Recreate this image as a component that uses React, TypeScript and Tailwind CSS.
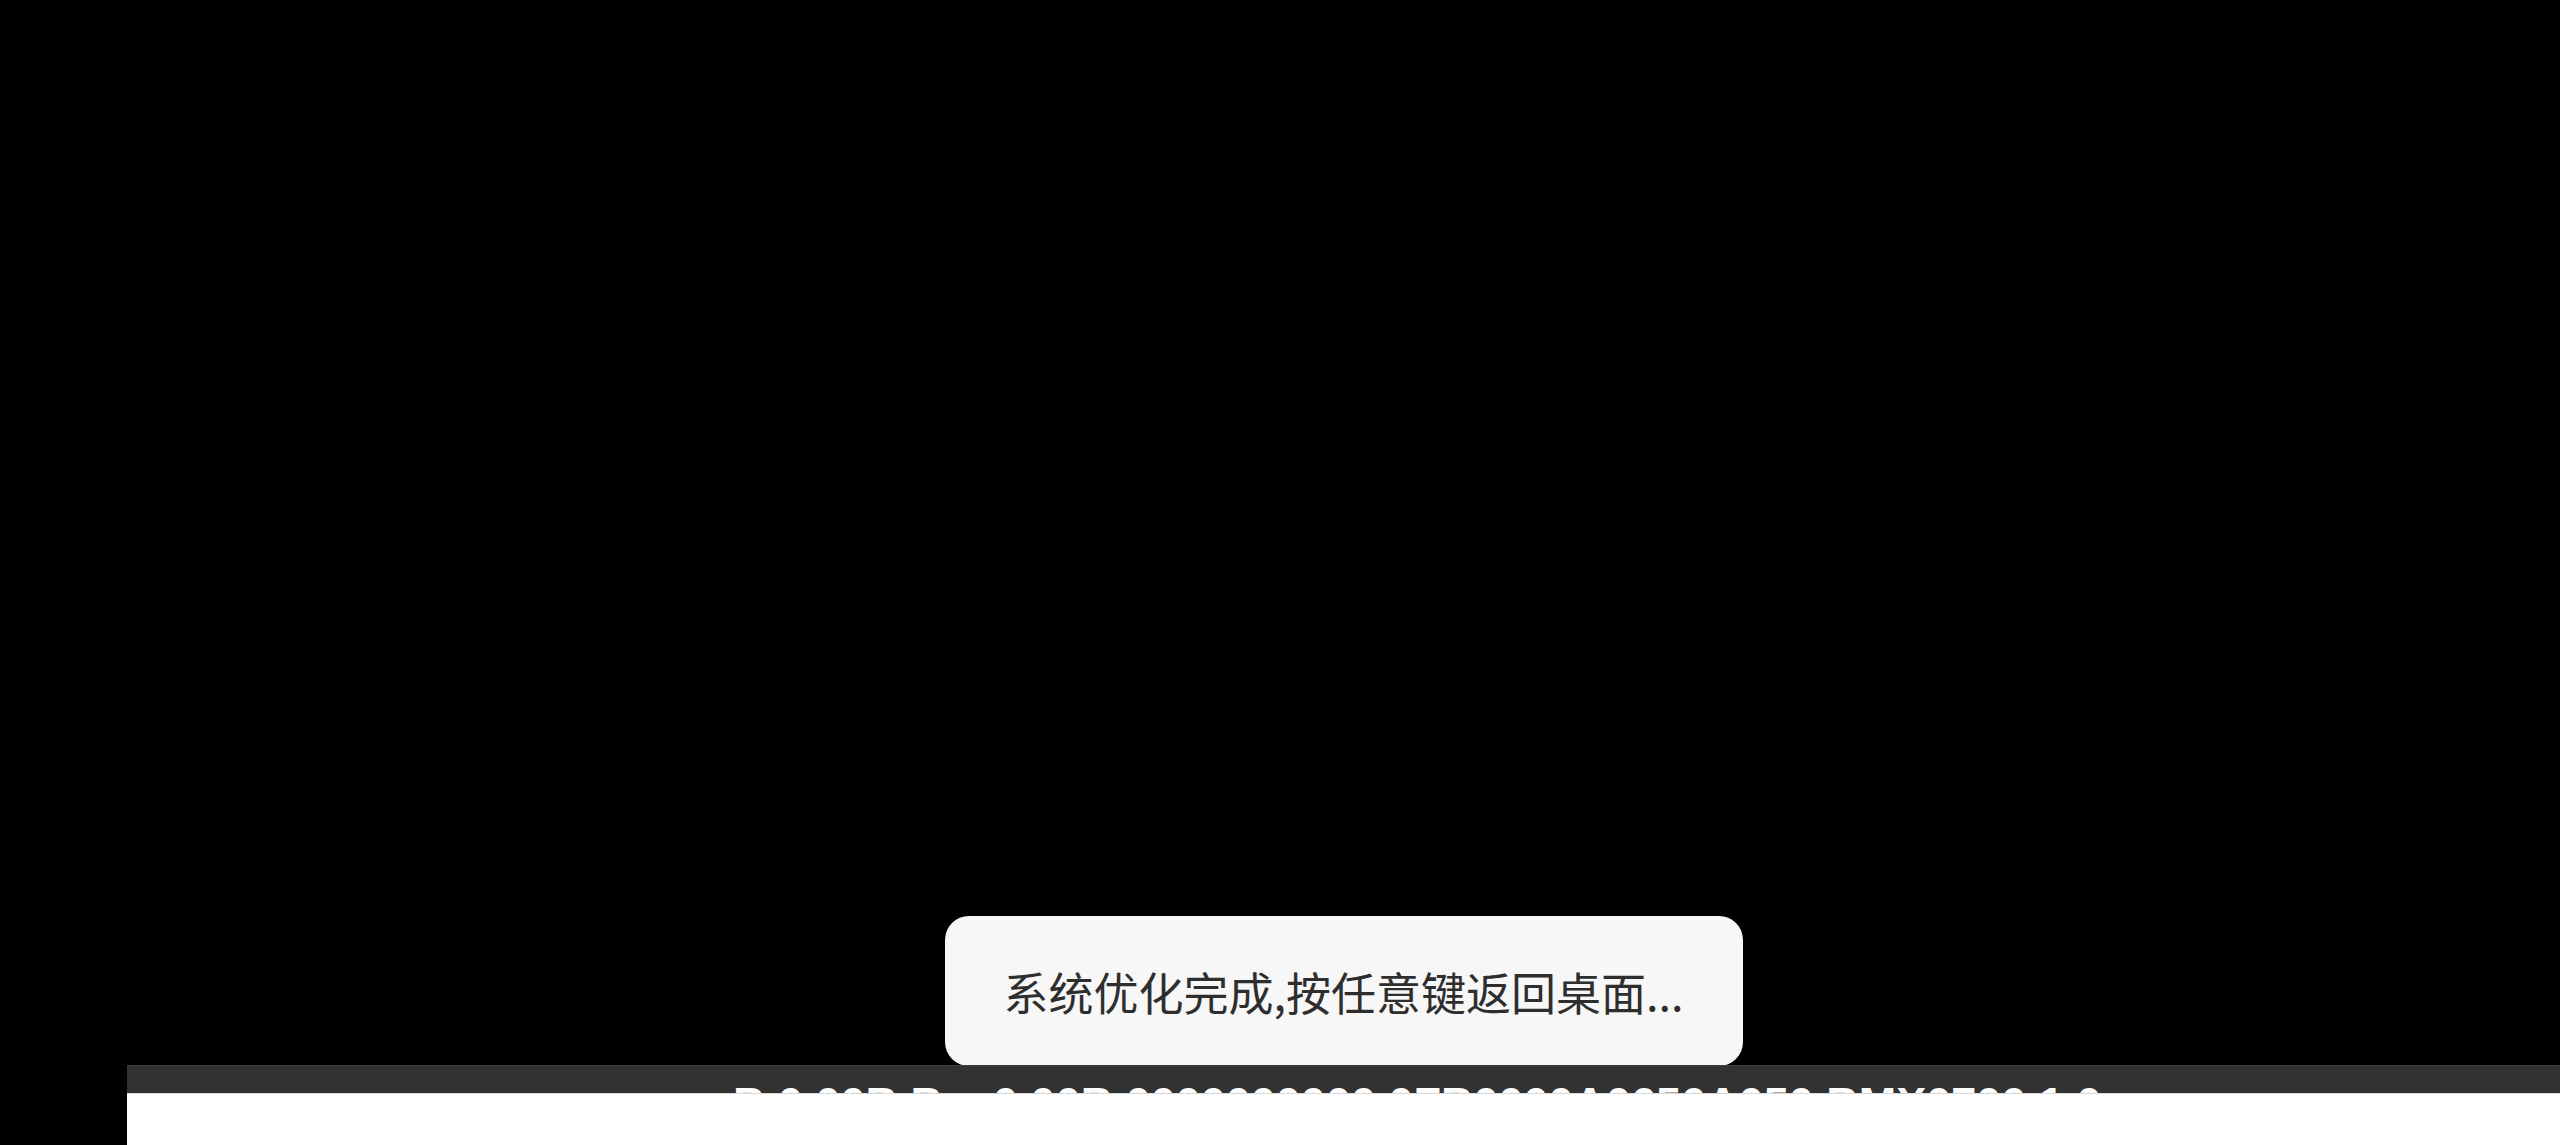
export default function App() {
  return (
    <div className="flex h-[1145px] w-full bg-black">
      {/* left black strip */}
      <div className="w-[127px] shrink-0" />

      <div className="flex flex-1 flex-col">
        <div className="flex flex-1 items-end justify-center">
          <div className="-mb-px flex h-[150px] w-[798px] items-center justify-center rounded-[24px] bg-[#f7f7f7]">
            <span className="text-[45px] font-normal leading-none text-[#2e2e2e] [font-family:'Noto_Sans_CJK_SC','Noto_Sans',sans-serif]">
              系统优化完成,按任意键返回桌面...
            </span>
          </div>
        </div>

        {/* status bar, text is cut off by the white panel below */}
        <div className="h-[28px] overflow-hidden border-t border-[#3d3d3d] bg-[#323232] pl-[606px] pt-[15px]">
          <p className="whitespace-nowrap text-[45px] font-bold leading-none text-white [font-family:'Liberation_Sans',Arial,sans-serif]">
            B 0.00B B... 0.00B 0000000000 0FB0000A0650A050 BMX0700 1.0
          </p>
        </div>
        <div className="h-[52px] border-t border-[#d8d8d8] bg-white" />
      </div>
    </div>
  )
}
